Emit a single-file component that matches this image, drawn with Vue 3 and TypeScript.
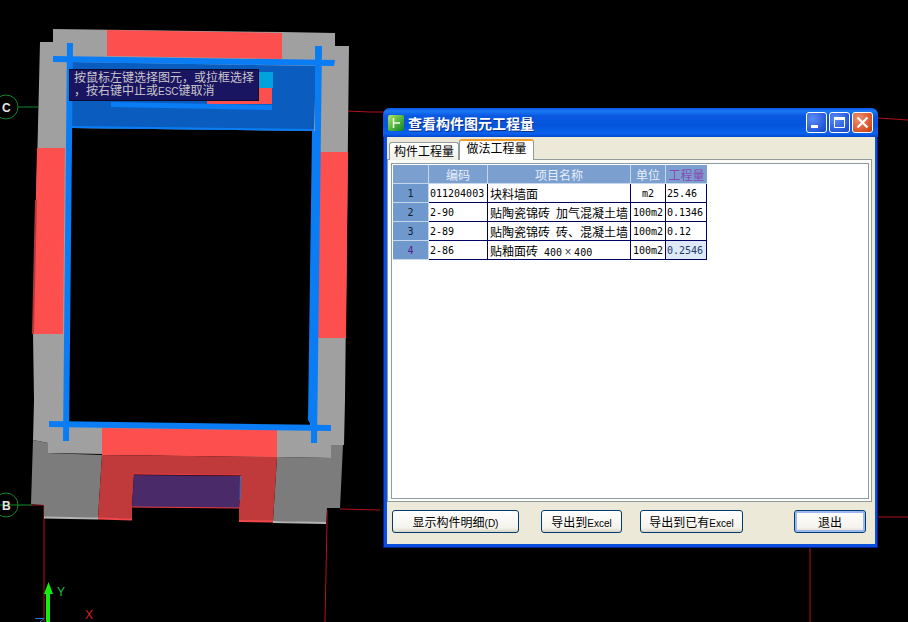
<script setup lang="ts">
interface Row {
  id: number;
  code: string;
  name: string;
  size: string[];
  unit: string;
  qty: string;
}

const rows: Row[] = [
  { id: 1, code: "011204003", name: "块料墙面", size: [], unit: "m2", qty: "25.46" },
  { id: 2, code: "2-90", name: "贴陶瓷锦砖 加气混凝土墙", size: [], unit: "100m2", qty: "0.1346" },
  { id: 3, code: "2-89", name: "贴陶瓷锦砖 砖、混凝土墙", size: [], unit: "100m2", qty: "0.12" },
  { id: 4, code: "2-86", name: "贴釉面砖 ", size: ["400", "400"], unit: "100m2", qty: "0.2546" },
];
</script>

<template>
  <div class="desktop">
    <svg class="scene" width="908" height="622" viewBox="0 0 908 622">
      <!-- axis bubbles and red grid lines -->
      <g fill="none" stroke="#0b8a2c">
        <circle cx="6" cy="107" r="12" />
        <circle cx="6" cy="505" r="12" />
        <path d="M18 107H38M0 505H32" />
      </g>
      <g fill="none" stroke="#b3121c">
        <path d="M346 111L370 112L384 112" />
        <path d="M878 118L908 120" />
        <path d="M340 509L380 510" />
        <path d="M878 517H908" />
        <path d="M31 505H44V622" />
        <path d="M327 510V523L325 622" />
        <path d="M810 548V622" />
      </g>
      <text x="2" y="112" class="bubble">C</text>
      <text x="2" y="510" class="bubble">B</text>

      <!-- upper face of the walls -->
      <polygon fill="#a0a0a0" points="53,29 282,32 335,33 335,46 349,46 345,400 344,445 331,445 331,458 48,453 48,443 33,440 34,400 33,334 40,42 53,42" />
      <polygon fill="#fe4f4f" points="107,30 282,33 282,59 107,56" />
      <polygon fill="#fe4f4f" points="37,148 65,148 63,334 33,334" />
      <path d="M36 200L33 334" stroke="#b8383a" stroke-width="2" fill="none" />
      <polygon fill="#fe4f4f" points="320,152 348,152 346,338 318,338" />
      <polygon fill="#fe4f4f" points="102,428 277,430 277,457 102,455" />

      <!-- front faces -->
      <polygon fill="#7c7c7c" points="33,440 48,443 48,453 102,455 98,518 44,517 44,505 31,504" />
      <polygon fill="#7c7c7c" points="277,457 331,458 331,445 343,445 340,508 327,508 326,523 273,521" />
      <polygon fill="#c03a3c" points="102,455 277,457 273,521 239,521 239,508 241,475 134,474 132,507 132,519 98,518" />
      <polygon fill="#4a2a68" points="134,475 241,476 239,508 132,507" />
      <path d="M134 474L241 475M132 507L239 508" stroke="#ef3c42" fill="none" />
      <path d="M240.5 476L240 500" stroke="#2a78d8" fill="none" />
      <path d="M98 518.5L132 519.5M239 521L273 521.5" stroke="#f0474b" stroke-width="2" fill="none" />
      <path d="M44 517.5L98 518.5M273 522L326 523" stroke="#b4b4b4" stroke-width="2" fill="none" />

      <!-- hole and selected slab -->
      <polygon fill="#000" points="70,128 314,131 310,426 66,424" />
      <polygon fill="#0a5cbe" points="72,62 316,66 314,131 72,128" />
      <polygon fill="#fe4f4f" points="207,88 272,88 272,104 207,104" />
      <polygon fill="#00a2dc" points="258,72 273,72 273,88 258,88" />
      <polygon fill="#0a7df5" points="111,102 272,105 272,110 111,107" />
      <polygon fill="#0a7df5" points="72,126 314,129 314,131 72,128" />

      <!-- blue axis strips -->
      <g fill="#0a7df5">
        <polygon points="53,56 335,60 334,66 53,62" />
        <polygon points="49,421 331,425 331,431 49,427" />
        <polygon points="67,43 73,43 69,441 63,441" />
        <polygon points="315,46 322,46 317,443 311,443 311,425 308,420 312,131 315,131" />
      </g>

      <!-- UCS marker -->
      <rect x="46" y="593" width="4" height="29" fill="#12ec12" />
      <polygon points="48.5,582 44,594 53,594" fill="#12ec12" />
      <path d="M35 618.5H44L40 622" stroke="#2a78d8" fill="none" />
      <text x="57" y="596" class="axis axis-y">Y</text>
      <text x="85" y="619" class="axis axis-x">X</text>
    </svg>

    <div class="hint">按鼠标左键选择图元，或拉框选择<br />，按右键中止或<span class="small">ESC</span>键取消</div>

    <section class="window">
      <header class="titlebar">
        <svg class="app-icon" width="16" height="16" viewBox="0 0 16 16">
          <defs>
            <linearGradient id="ico" x1="0" y1="0" x2="1" y2="1">
              <stop offset="0" stop-color="#b4e46a" />
              <stop offset="0.5" stop-color="#54b83c" />
              <stop offset="1" stop-color="#14802a" />
            </linearGradient>
          </defs>
          <rect width="16" height="16" rx="2" fill="url(#ico)" />
          <path d="M5.5 3V13M5.5 8H12" stroke="#f4faf0" stroke-width="1.5" fill="none" />
        </svg>
        <span class="title">查看构件图元工程量</span>
        <div class="caption-btns">
          <button class="cap">
            <svg width="21" height="21" viewBox="0 0 21 21"><rect x="5" y="13" width="7" height="3" fill="#fff" /></svg>
          </button>
          <button class="cap">
            <svg width="21" height="21" viewBox="0 0 21 21"><path d="M5.5 6.5H15.5V15.5H5.5Z" stroke="#fff" fill="none" /><rect x="5" y="5" width="11" height="3" fill="#fff" /></svg>
          </button>
          <button class="cap close">
            <svg width="21" height="21" viewBox="0 0 21 21"><path d="M5.5 5.5L15.5 15.5M15.5 5.5L5.5 15.5" stroke="#fff" stroke-width="2.2" fill="none" /></svg>
          </button>
        </div>
      </header>

      <div class="body">
        <div class="tabs">
          <div class="tab">构件工程量</div>
          <div class="tab active">做法工程量</div>
        </div>
        <div class="panel">
          <div class="grid-box">
            <table class="grid">
              <colgroup>
                <col style="width: 36px" />
                <col style="width: 59px" />
                <col style="width: 143px" />
                <col style="width: 35px" />
                <col style="width: 41px" />
              </colgroup>
              <thead>
                <tr>
                  <th></th>
                  <th>编码</th>
                  <th>项目名称</th>
                  <th>单位</th>
                  <th class="current-col">工程量</th>
                </tr>
              </thead>
              <tbody>
                <tr v-for="row in rows" :key="row.id">
                  <th class="row-head" :class="{ 'current-row': row.id === 4 }"><span class="latin">{{ row.id }}</span></th>
                  <td><span class="latin">{{ row.code }}</span></td>
                  <td class="name">
                    {{ row.name }}<template v-if="row.size.length"><span class="latin">{{ row.size[0] }}</span><span class="times">×</span><span class="latin">{{ row.size[1] }}</span></template>
                  </td>
                  <td class="center"><span class="latin">{{ row.unit }}</span></td>
                  <td :class="{ selected: row.id === 4 }"><span class="latin">{{ row.qty }}</span></td>
                </tr>
              </tbody>
            </table>
          </div>
        </div>
        <div class="actions">
          <button class="btn b1">显示构件明细<span class="small">(D)</span></button>
          <button class="btn b2">导出到<span class="small">Excel</span></button>
          <button class="btn b3">导出到已有<span class="small">Excel</span></button>
          <button class="btn b4 default">退出</button>
        </div>
      </div>
    </section>
  </div>
</template>

<style>
html,
body {
  margin: 0;
  background: #000;
}
</style>

<style scoped>
.desktop {
  position: relative;
  width: 908px;
  height: 622px;
  overflow: hidden;
  background: #000;
  font-family: "Liberation Sans", "Noto Sans CJK SC", sans-serif;
  font-size: 12px;
}
.scene {
  display: block;
}
.bubble {
  font: bold 12px "Liberation Sans", sans-serif;
  fill: #e4e4e4;
}
.axis {
  font: 12px "Liberation Sans", sans-serif;
}
.axis-y {
  fill: #22c04a;
}
.axis-x {
  fill: #d8202a;
}
.hint {
  position: absolute;
  left: 69px;
  top: 69px;
  width: 190px;
  height: 32px;
  box-sizing: border-box;
  padding: 2px 0 0 4px;
  background: #1a1560;
  border: 1px solid #0a0a30;
  color: #c8c6cc;
  line-height: 13px;
  white-space: nowrap;
}
.small {
  font-size: 10px;
}
.window {
  position: absolute;
  left: 383px;
  top: 108px;
  width: 495px;
  height: 440px;
  box-sizing: border-box;
  display: flex;
  flex-direction: column;
  padding: 0 3px 4px 4px;
  border-radius: 7px 7px 0 0;
  background: #0a4fe0;
  box-shadow: inset 0 0 0 1px #00208c;
}
.titlebar {
  height: 29px;
  display: flex;
  align-items: center;
  margin: 0 -3px 0 -4px;
  padding: 0 5px;
  border-radius: 7px 7px 0 0;
  background: linear-gradient(#0a5ae8 0, #1a78f4 3px, #0a58e0 8px, #0454dc 60%, #0a62ee 88%, #0448cc 100%);
}
.app-icon {
  flex: none;
}
.title {
  margin-left: 4px;
  color: #fff;
  font-size: 14px;
  font-weight: bold;
  text-shadow: 1px 1px 0 #0a2f90;
}
.caption-btns {
  margin-left: auto;
  display: flex;
  gap: 2px;
}
.cap {
  width: 21px;
  height: 21px;
  padding: 0;
  box-sizing: border-box;
  border: 1px solid #fff;
  border-radius: 3px;
  background: radial-gradient(circle at 30% 30%, #5c8cf4, #2458dc 70%, #1a44c0);
  display: block;
  overflow: hidden;
}
.cap svg {
  display: block;
  margin: -1px;
}
.cap.close {
  background: radial-gradient(circle at 30% 30%, #ec9070, #dc5a30 60%, #b83c18);
}
.body {
  flex: 1;
  min-height: 0;
  display: flex;
  flex-direction: column;
  background: #ece9d8;
}
.tabs {
  display: flex;
  align-items: flex-end;
  height: 21px;
  padding: 2px 0 0 2px;
  position: relative;
  z-index: 1;
  margin-bottom: -1px;
}
.tab {
  height: 18px;
  box-sizing: border-box;
  width: 70px;
  border: 1px solid #919b9c;
  border-bottom: 0;
  border-radius: 3px 3px 0 0;
  background: linear-gradient(#fff, #f0efe6);
  text-align: center;
  line-height: 18px;
  color: #000;
}
.tab.active {
  width: 75px;
  height: 21px;
  line-height: 17px;
  background: #fff;
  border-top: 2px solid #f0a030;
}
.panel {
  height: 343px;
  box-sizing: border-box;
  margin-right: 3px;
  border: 1px solid #919b9c;
  background: #fbfbf8;
  padding: 3px 2px 2px 3px;
}
.grid-box {
  height: 100%;
  box-sizing: border-box;
  border: 1px solid #8c9ca4;
  background: #fff;
  padding: 1px;
}
.grid {
  table-layout: fixed;
  width: 314px;
  border-collapse: separate;
  border-spacing: 0;
  color: #000;
}
.grid th,
.grid td {
  height: 19px;
  box-sizing: border-box;
  padding: 0;
  font-weight: normal;
  white-space: nowrap;
  overflow: hidden;
}
.grid thead th {
  background: #7ba0d0;
  color: #e8eef8;
  text-align: center;
  border-right: 1px solid #c8d8ec;
  border-bottom: 1px solid #c8d8ec;
}
.grid thead th.current-col {
  color: #8a48b4;
  border-right: 0;
}
.grid .row-head {
  background: #6f98cc;
  color: #123;
  text-align: center;
  border-right: 1px solid #c8d8ec;
  border-bottom: 1px solid #c8d8ec;
}
.grid .row-head.current-row {
  color: #5a1a90;
}
.grid td {
  padding-left: 1px;
  border-right: 1px solid #000060;
  border-bottom: 1px solid #000060;
}
.grid td.name {
  padding-left: 2px;
  word-spacing: 2.7px;
}
.grid td.center {
  padding-left: 0;
  text-align: center;
}
.grid td.selected {
  background: #dfe8f6;
  color: #1c3c6c;
}
.latin {
  font-family: "DejaVu Sans Mono", monospace;
  font-size: 10px;
}
.times {
  display: inline-block;
  width: 12px;
  text-align: center;
  color: #444;
}
.actions {
  flex: 1;
  display: flex;
  align-items: flex-start;
  padding: 8px 0 0 5px;
}
.btn {
  height: 23px;
  padding: 0;
  box-sizing: border-box;
  border: 1px solid #003c74;
  border-radius: 3px;
  background: linear-gradient(#fff, #f4f3ec 80%, #d8d4c4);
  color: #000;
  font: inherit;
}
.b1 {
  width: 127px;
}
.b2 {
  width: 81px;
  margin-left: 22px;
}
.b3 {
  width: 103px;
  margin-left: 18px;
}
.b4 {
  width: 72px;
  margin-left: 51px;
}
.default {
  box-shadow: inset 0 0 0 2px #9cb8ec;
}
</style>
